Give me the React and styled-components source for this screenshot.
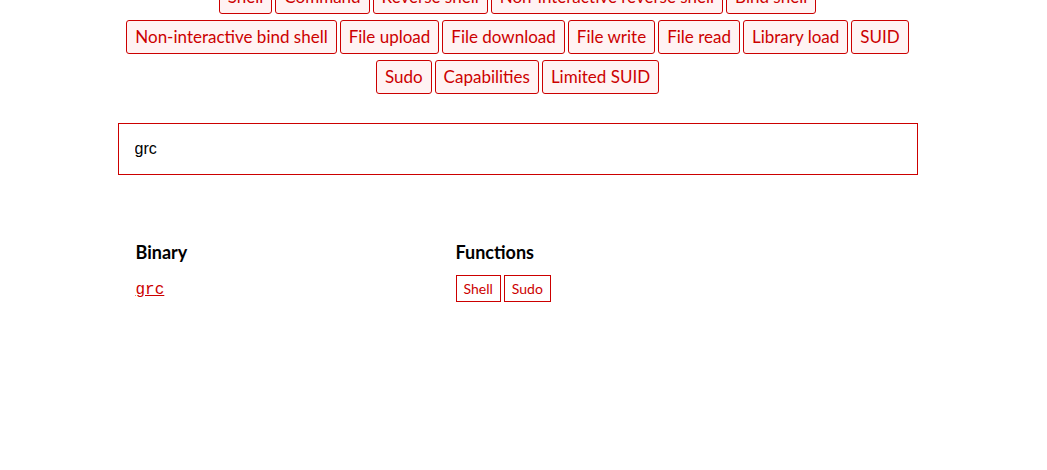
import React from "react";
import styled, { createGlobalStyle } from "styled-components";

const Global = createGlobalStyle`
  html, body { margin: 0; padding: 0; background: #fff; }
  body {
    padding-right: 12px;
    font-family: "Lato", "Noto Sans", sans-serif;
    color: #111;
    overflow: hidden;
  }
`;

const Page = styled.main`
  width: 800px;
  margin: 0 auto;
`;

const FilterList = styled.div`
  display: flex;
  flex-direction: column;
  gap: 6px;
  margin-top: -20px;
`;

const FilterRow = styled.div`
  display: flex;
  justify-content: center;
  gap: 3px;
`;

const FilterButton = styled.button`
  height: 34px;
  padding: 0 8px;
  border: 1px solid #cc0000;
  border-radius: 3px;
  background: #fff3f3;
  color: #cc0000;
  font-family: "Lato", "Noto Sans", sans-serif;
  font-size: 17px;
  line-height: 32px;
  cursor: pointer;
`;

const Search = styled.input`
  display: block;
  box-sizing: border-box;
  width: 800px;
  height: 52px;
  margin-top: 29px;
  padding: 0 16px;
  border: 1px solid #cc0000;
  border-radius: 0;
  outline: none;
  font-family: "Liberation Sans", Arial, sans-serif;
  font-size: 16px;
  color: #000;
`;

const Table = styled.table`
  width: 800px;
  margin-top: 60px;
  border-collapse: collapse;
`;

const Th = styled.th`
  width: ${(p) => p.$w || "auto"};
  text-align: left;
  padding: 6px 18px;
  font-family: "Lato", "Noto Sans", sans-serif;
  font-size: 18px;
  font-weight: 700;
  color: #000;
`;

const Td = styled.td`
  padding: 6px 18px 5px;
  vertical-align: middle;
`;

const BinLink = styled.a`
  font-family: "Liberation Mono", "Courier New", monospace;
  font-size: 16px;
  color: #cc0000;
  text-decoration: underline;
`;

const Tags = styled.div`
  display: flex;
  gap: 3px;
`;

const Tag = styled.a`
  display: inline-block;
  height: 27px;
  box-sizing: border-box;
  padding: 0 7px;
  border: 1px solid #cc0000;
  color: #cc0000;
  font-family: "Lato", "Noto Sans", sans-serif;
  font-size: 14px;
  line-height: 25px;
  text-decoration: none;
`;

const rows = [
  ["Shell", "Command", "Reverse shell", "Non-interactive reverse shell", "Bind shell"],
  ["Non-interactive bind shell", "File upload", "File download", "File write", "File read", "Library load", "SUID"],
  ["Sudo", "Capabilities", "Limited SUID"],
];

export default function App() {
  return (
    <>
      <Global />
      <Page>
        <FilterList>
          {rows.map((row, i) => (
            <FilterRow key={i}>
              {row.map((f) => (
                <FilterButton key={f}>{f}</FilterButton>
              ))}
            </FilterRow>
          ))}
        </FilterList>
        <Search defaultValue="grc" />
        <Table>
          <thead>
            <tr>
              <Th $w="40%">Binary</Th>
              <Th>Functions</Th>
            </tr>
          </thead>
          <tbody>
            <tr>
              <Td>
                <BinLink href="#">grc</BinLink>
              </Td>
              <Td>
                <Tags>
                  <Tag href="#">Shell</Tag>
                  <Tag href="#">Sudo</Tag>
                </Tags>
              </Td>
            </tr>
          </tbody>
        </Table>
      </Page>
    </>
  );
}
